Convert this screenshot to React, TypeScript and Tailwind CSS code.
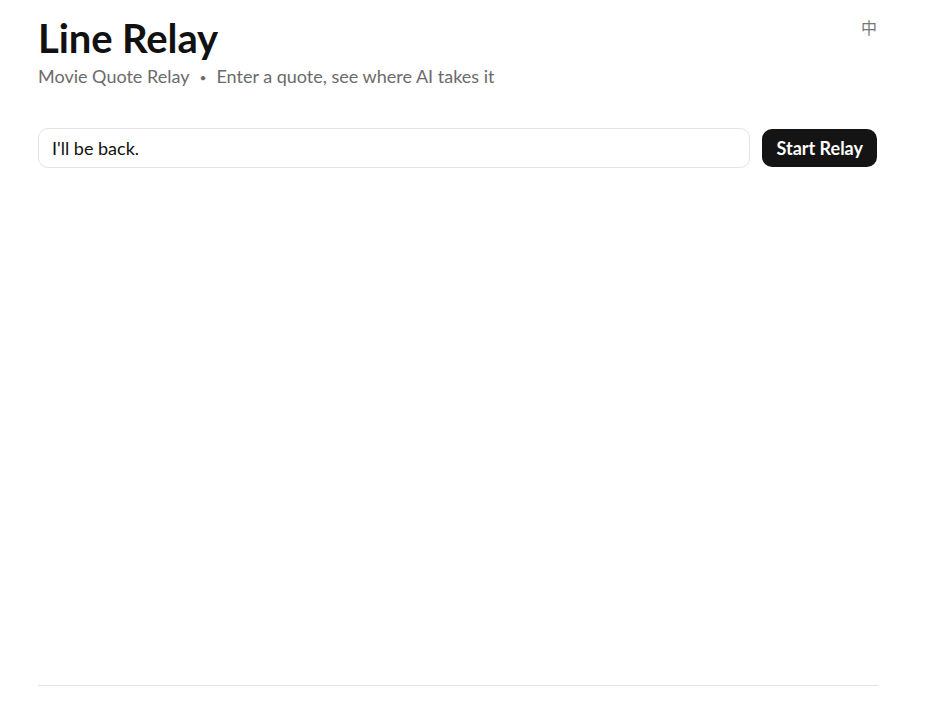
import { useState } from "react";

export default function App() {
  const [quote, setQuote] = useState("I'll be back.");

  return (
    <div
      className="flex min-h-screen flex-col bg-white text-[#111]"
      style={{ fontFamily: '"Lato", "Noto Sans CJK SC", sans-serif' }}
    >
      <div className="flex w-[877px] flex-1 flex-col pl-[38px]">
        <header className="flex items-start justify-between pt-[14px]">
          <div>
            <h1 className="text-[40px] font-bold leading-[48px] tracking-[-0.1px]">Line Relay</h1>
            <p className="mt-[2px] text-[18px] leading-[24px] text-[#6b6b6b]">
              Movie Quote Relay
              <span className="mx-[10px] text-[12px] align-middle">•</span>
              Enter a quote, see where AI takes it
            </p>
          </div>
          <button className="mt-[2px] text-[16px] text-[#777]">中</button>
        </header>

        <form
          className="mt-[38px] flex items-center gap-3"
          onSubmit={(e) => e.preventDefault()}
        >
          <input
            value={quote}
            onChange={(e) => setQuote(e.target.value)}
            className="h-[40px] flex-1 rounded-[10px] border border-[#e3e3e3] px-[13px] text-[18px] text-[#111] outline-none"
          />
          <button
            type="submit"
            className="h-[38px] rounded-[10px] bg-[#141414] px-[14px] text-[18px] font-bold text-white"
          >
            Start Relay
          </button>
        </form>
      </div>

      <footer className="ml-[38px] h-[26px] w-[840px] border-t border-[#e5e5e5]" />
    </div>
  );
}
